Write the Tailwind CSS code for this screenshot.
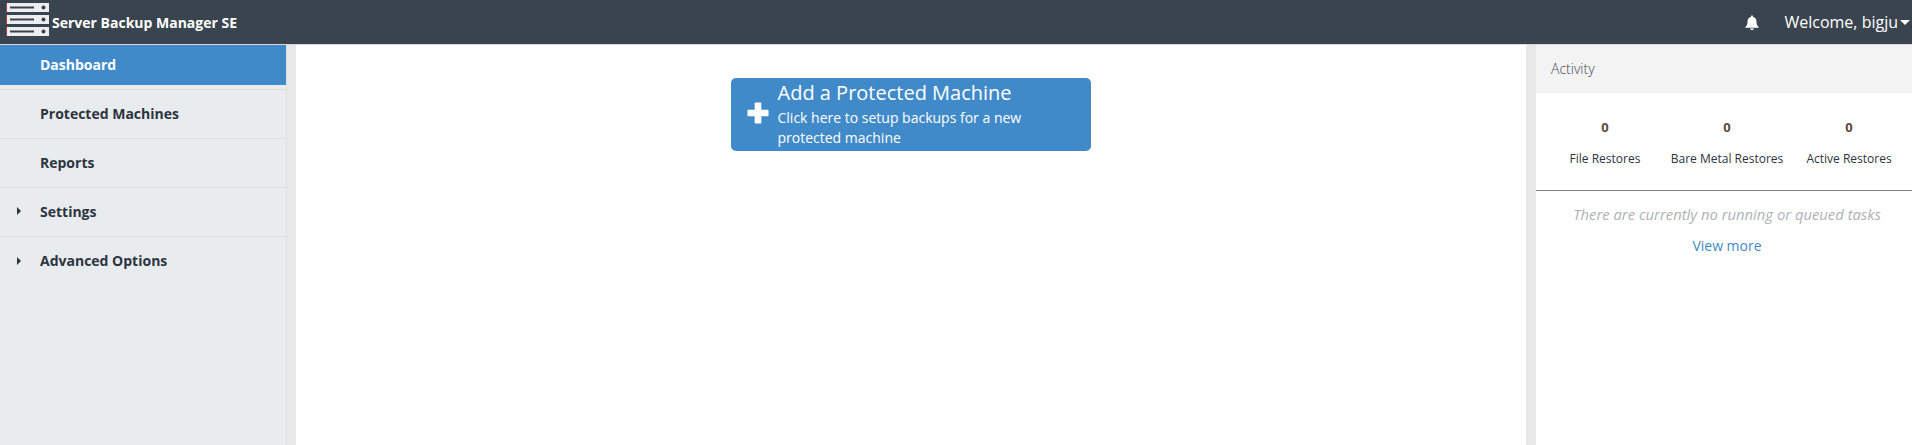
<!DOCTYPE html>
<html lang="en">
<head>
  <meta charset="UTF-8">
  <title>Server Backup Manager SE</title>
  <script src="https://cdn.jsdelivr.net/npm/@tailwindcss/browser@4"></script>
</head>
<body class="bg-white font-['Open_Sans',sans-serif] h-[445px] overflow-hidden flex flex-col">
  <!-- top bar -->
  <header class="h-[45px] shrink-0 bg-[#3a444e] border-b border-[#d5d8dc] flex items-center text-white">
    <svg class="ml-[6px] w-[44px] h-[42px] shrink-0" viewBox="0 0 44 42">
      <rect x="0" y="2" width="43" height="9" fill="#eceef0"/>
      <rect x="0" y="2" width="1" height="9" fill="#b04050"/>
      <rect x="4" y="5.500" width="24" height="2" fill="#3a444e"/>
      <circle cx="37.500" cy="6.500" r="2" fill="#3a444e"/>
      <rect x="0" y="14" width="43" height="9" fill="#eceef0"/>
      <rect x="0" y="14" width="1" height="9" fill="#b04050"/>
      <rect x="4" y="17.500" width="24" height="2" fill="#3a444e"/>
      <circle cx="37.500" cy="18.500" r="2" fill="#3a444e"/>
      <rect x="0" y="26" width="43" height="9" fill="#eceef0"/>
      <rect x="0" y="26" width="1" height="9" fill="#b04050"/>
      <rect x="4" y="29.500" width="24" height="2" fill="#3a444e"/>
      <circle cx="37.500" cy="30.500" r="2" fill="#3a444e"/>
    </svg>
    <span class="ml-[2px] text-[14px] font-bold">Server Backup Manager SE</span>
    <svg class="ml-auto mr-[-1px] w-[14px] h-[15px]" viewBox="0 0 14 15" fill="#fff">
      <path d="M7 0.500c.6 0 1 .4 1 1v.5c2.200.4 3.500 2.200 3.500 4.500 0 3 .7 4.200 2.200 5.500v.7H.3v-.7C1.800 10.700 2.500 9.500 2.500 6.500 2.500 4.200 3.800 2.400 6 2v-.5c0-.6.400-1 1-1zM5.200 13.500h3.600c0 1-.8 1.500-1.800 1.500s-1.800-.5-1.800-1.500z"/>
    </svg>
    <span class="ml-[26px] text-[16px]">Welcome, bigju</span>
    <span class="ml-[2px] mr-[2px] w-0 h-0 border-x-[5px] border-x-transparent border-t-[5px] border-t-white"></span>
  </header>

  <div class="flex flex-1 min-h-0">
    <!-- side menu -->
    <nav class="w-[287px] shrink-0 bg-[#e9ecef] text-[14px] font-bold text-[#2c3440] border-r border-[#dfe2e5]">
      <a class="flex items-center h-[40px] pl-[40px] pb-[2px] bg-[#418ac9] text-white">Dashboard</a>
      <div class="h-[5px] border-b border-[#dcdfe3]"></div>
      <a class="flex items-center h-[49px] pl-[40px] pb-[1px] border-b border-[#dcdfe3]">Protected Machines</a>
      <a class="flex items-center h-[49px] pl-[40px] pb-[2px] border-b border-[#dcdfe3]">Reports</a>
      <a class="flex items-center h-[49px] pl-[17px] pb-[2px] border-b border-[#dcdfe3]">
        <span class="w-0 h-0 border-y-[4px] border-y-transparent border-l-[4px] border-l-[#2c3440] mr-[19px]"></span>Settings
      </a>
      <a class="flex items-center h-[49px] pl-[17px] pb-[2px]">
        <span class="w-0 h-0 border-y-[4px] border-y-transparent border-l-[4px] border-l-[#2c3440] mr-[19px]"></span>Advanced Options
      </a>
    </nav>
    <div class="w-[9px] shrink-0 bg-[#e8e8e8]"></div>

    <!-- main -->
    <main class="flex-1 flex justify-center items-start pt-[33px] pr-[1px]">
      <button class="w-[360px] h-[73px] bg-[#418ac9] rounded-[5px] text-white flex items-center text-left pl-[16px]">
        <svg class="w-[22px] h-[22px] shrink-0 mt-[-4px]" viewBox="0 0 23 23" fill="#fff">
          <path d="M8 1.500a1 1 0 0 1 1-1h5a1 1 0 0 1 1 1V8h6.500a1 1 0 0 1 1 1v5a1 1 0 0 1-1 1H15v6.500a1 1 0 0 1-1 1H9a1 1 0 0 1-1-1V15H1.500a1 1 0 0 1-1-1V9a1 1 0 0 1 1-1H8z"/>
        </svg>
        <span class="ml-[9px] w-[300px]">
          <span class="block text-[20px] leading-[23px] mb-[4px]">Add a Protected Machine</span>
          <span class="block text-[14px] leading-[20px]">Click here to setup backups for a new<br>protected machine</span>
        </span>
      </button>
    </main>

    <div class="w-[10px] shrink-0 bg-[#e8e8e8]"></div>

    <!-- activity panel -->
    <aside class="w-[376px] shrink-0">
      <div class="h-[48px] bg-[#f3f3f3] flex items-center pl-[15px] pb-[2px] text-[14px] font-light text-[#3d4650]">Activity</div>
      <div class="h-[98px] border-b border-[#808080] grid grid-cols-3 pl-[8px] pr-[2px] text-center text-[#2c3440]">
        <div class="pt-[25px]">
          <div class="text-[13px] font-bold leading-[18px] text-[#5a4a42]">0</div>
          <div class="mt-[15px] text-[12px] leading-[16px]">File Restores</div>
        </div>
        <div class="pt-[25px]">
          <div class="text-[13px] font-bold leading-[18px] text-[#5a4a42]">0</div>
          <div class="mt-[15px] text-[12px] leading-[16px]">Bare Metal Restores</div>
        </div>
        <div class="pt-[25px]">
          <div class="text-[13px] font-bold leading-[18px] text-[#5a4a42]">0</div>
          <div class="mt-[15px] text-[12px] leading-[16px]">Active Restores</div>
        </div>
      </div>
      <p class="mt-[13px] text-center text-[14.8px] leading-[20px] italic text-[#aeb2b6] pl-[6px]">There are currently no running or queued tasks</p>
      <p class="mt-[12px] text-center text-[14px] leading-[20px] text-[#418ac9] pl-[6px]">View more</p>
    </aside>
  </div>
</body>
</html>
